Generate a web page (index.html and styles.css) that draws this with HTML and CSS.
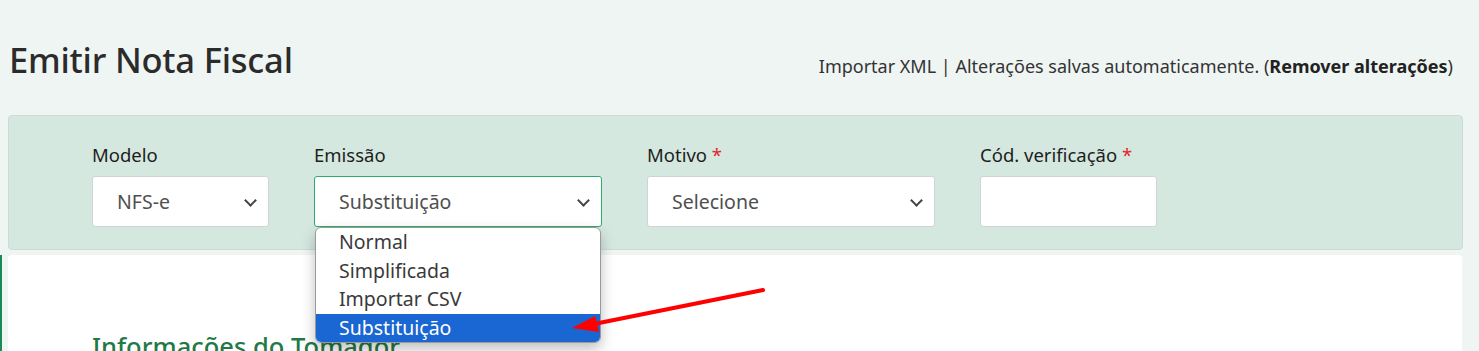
FILE: index.html
```html
<!DOCTYPE html>
<html lang="pt-BR">
<head>
  <meta charset="UTF-8" />
  <title>Emitir Nota Fiscal</title>
  <link rel="stylesheet" href="styles.css">
</head>
<body>

  <!-- Cabeçalho -->
  <div class="page-head">
    <h1>Emitir Nota Fiscal</h1>
    <div class="head-links">Importar XML | Alterações salvas automaticamente. (<b>Remover alterações</b>)</div>
  </div>

  <!-- Filtros -->
  <div class="panel">
    <div class="field field-sm">
      <label>Modelo</label>
      <div class="select">NFS-e<span class="chev"></span></div>
    </div>
    <div class="field field-lg">
      <label>Emissão</label>
      <div class="select active">Substituição<span class="chev"></span></div>
      <ul class="dropdown">
        <li>Normal</li>
        <li>Simplificada</li>
        <li>Importar CSV</li>
        <li class="selected">Substituição</li>
      </ul>
    </div>
    <div class="field field-lg">
      <label>Motivo <span class="req">*</span></label>
      <div class="select">Selecione<span class="chev"></span></div>
    </div>
    <div class="field field-sm">
      <label>Cód. verificação <span class="req">*</span></label>
      <div class="input"></div>
    </div>
  </div>

  <!-- Conteúdo -->
  <div class="content">
    <div class="card">
      <h2>Informações do Tomador</h2>
    </div>
  </div>

  <svg class="arrow" width="220" height="60" viewBox="0 0 220 60">
    <path d="M197 6 L28 40" stroke="#f00" stroke-width="4" stroke-linecap="round" fill="none"/>
    <path d="M6 44 L29 32 L33 48 Z" fill="#f00"/>
  </svg>

</body>
</html>
```

FILE: styles.css
```css
* {
  box-sizing: border-box;
  margin: 0;
  padding: 0;
}

body {
  background: #eff5f3;
  font-family: "Noto Sans", "Open Sans", sans-serif;
  color: #212529;
  height: 351px;
  overflow: hidden;
  position: relative;
}

.page-head {
  display: flex;
  justify-content: space-between;
  align-items: baseline;
  padding: 36px 26px 0 9px;
  height: 115px;
}

.page-head h1 {
  font-size: 34.5px;
  font-weight: 500;
  color: #2b2b2b;
  letter-spacing: -0.2px;
}

.head-links {
  font-size: 18px;
  color: #333;
}

.head-links b {
  font-weight: 700;
  color: #222;
}

.panel {
  margin: 0 16px 0 8px;
  height: 135px;
  background: #d5e8df;
  border: 1px solid #cadcd3;
  border-radius: 4px;
  display: flex;
  gap: 45px;
  padding: 27px 0 0 83px;
}

.field {
  position: relative;
}

.field label {
  display: block;
  font-size: 18.5px;
  height: 33px;
  line-height: 24px;
  color: #1d1d1d;
}

.req {
  color: #e0262d;
}

.field-sm {
  width: 177px;
}

.field-lg {
  width: 288px;
}

.select,
.input {
  height: 51px;
  background: #fff;
  border: 1px solid #ced4da;
  border-radius: 3px;
  font-size: 19.5px;
  color: #4f4f4f;
  padding: 11px 0 0 24px;
  position: relative;
}

.select.active {
  border-color: #2eaa6e;
}

.chev {
  position: absolute;
  right: 13px;
  top: 19px;
  width: 9px;
  height: 9px;
  border-right: 2px solid #444;
  border-bottom: 2px solid #444;
  transform: rotate(45deg);
}

.dropdown {
  list-style: none;
  position: absolute;
  left: 1px;
  top: 84px;
  width: 286px;
  background: #fff;
  border: 1px solid #9a9a9a;
  border-radius: 6px;
  box-shadow: 0 6px 14px rgba(0, 0, 0, 0.25);
  overflow: hidden;
  z-index: 5;
}

.dropdown li {
  font-size: 19.5px;
  line-height: 28.5px;
  padding-left: 23px;
  color: #3a3a3a;
}

.dropdown li.selected {
  background: #1a66d2;
  color: #fff;
}

.content {
  margin-top: 5px;
  border-left: 2px solid #1b8a58;
  padding: 0 17px 0 6px;
}

.card {
  background: #fff;
  border-radius: 4px;
  height: 120px;
  padding: 74px 0 0 84px;
}

.card h2 {
  font-size: 25.5px;
  font-weight: 500;
  color: #1f7a47;
}

.arrow {
  position: absolute;
  left: 566px;
  top: 284px;
  z-index: 10;
}
```
